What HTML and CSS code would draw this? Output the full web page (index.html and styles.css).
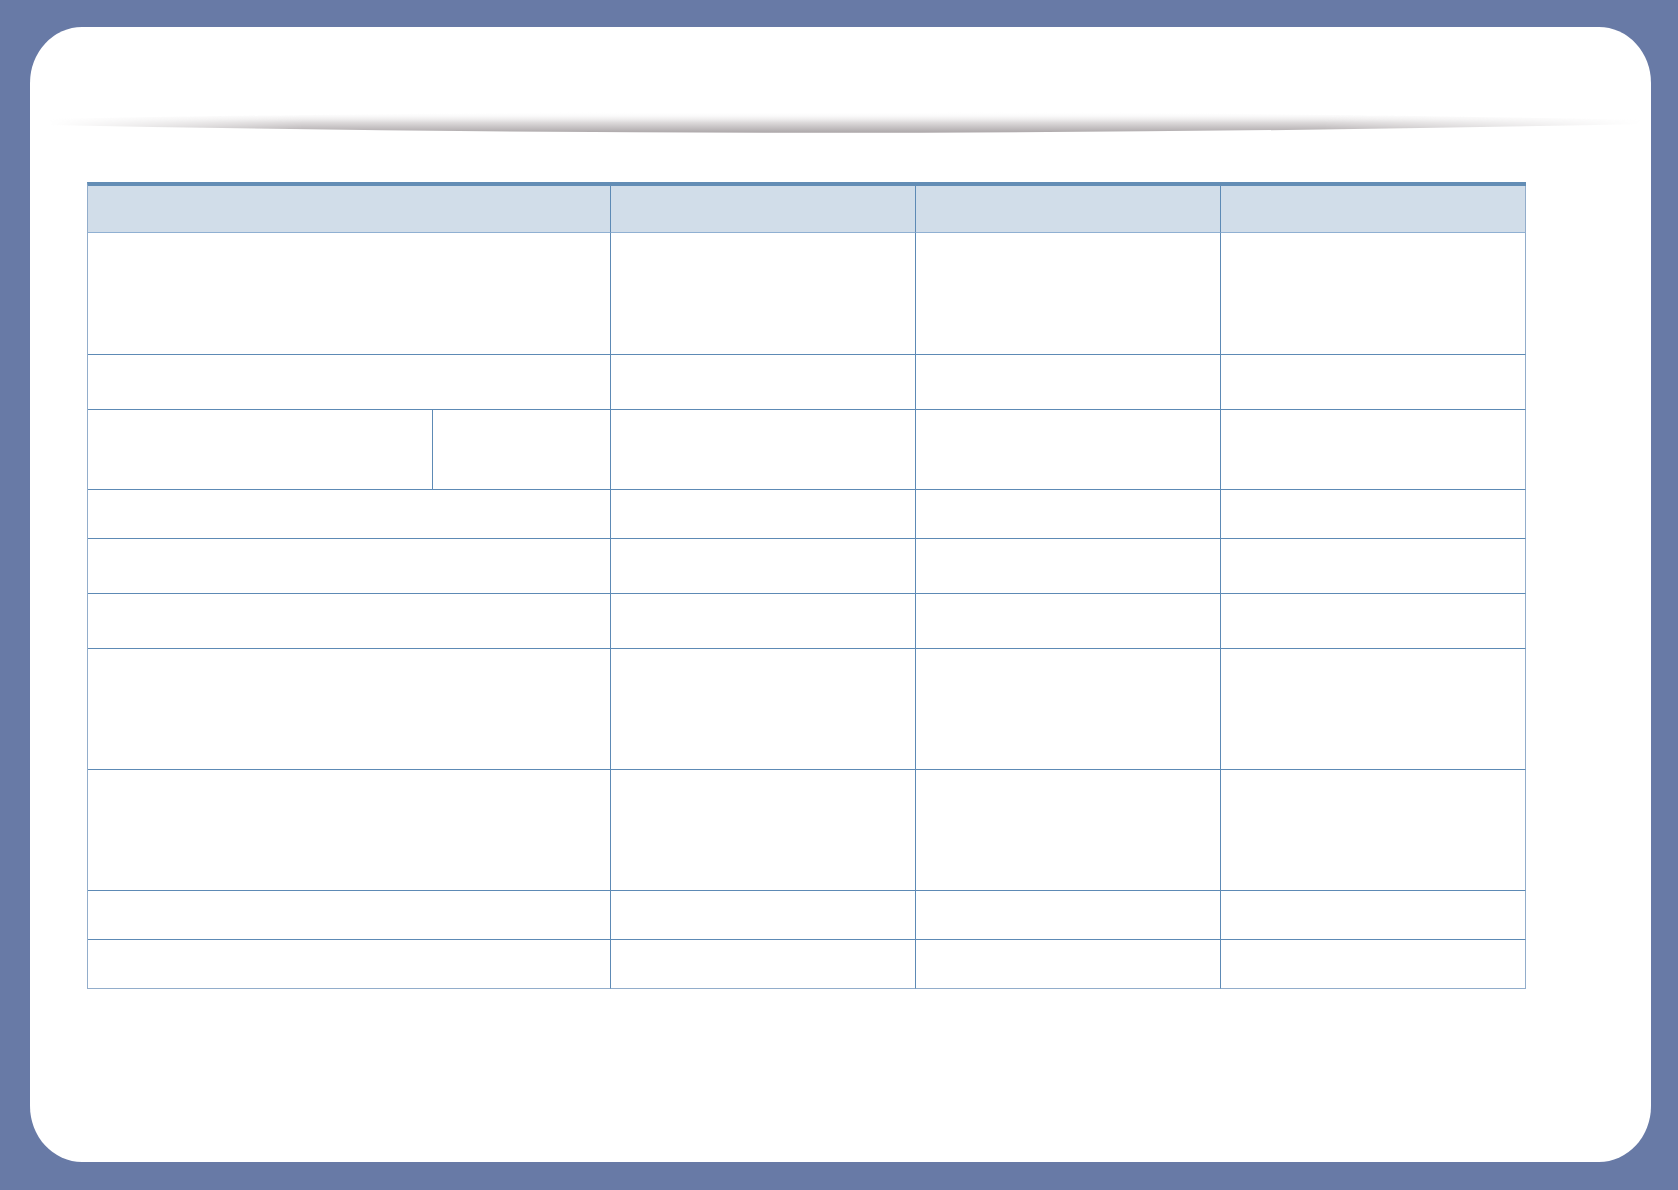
FILE: index.html
```html
<!DOCTYPE html>
<html lang="en">
  <head>
    <meta charset="UTF-8" />
    <meta name="viewport" content="width=device-width, initial-scale=1.0" />
    <title>Specifications</title>

    <link rel="stylesheet" href="styles.css">
  </head>
  <body>
    <div class="panel">
      <svg class="swoosh" viewBox="0 0 1594 26" preserveAspectRatio="none" aria-hidden="true">
        <defs>
          <linearGradient id="swoosh-shade" x1="0" y1="0" x2="0" y2="1">
            <stop offset="0" stop-color="#ffffff" stop-opacity="0" />
            <stop offset="0.5" stop-color="#dedbdc" />
            <stop offset="1" stop-color="#aca7a9" />
          </linearGradient>
          <linearGradient id="swoosh-fade" x1="0" y1="0" x2="1" y2="0">
            <stop offset="0" stop-color="#fff" stop-opacity="0" />
            <stop offset="0.16" stop-color="#fff" stop-opacity="1" />
            <stop offset="0.8" stop-color="#fff" stop-opacity="1" />
            <stop offset="1" stop-color="#fff" stop-opacity="0" />
          </linearGradient>
          <mask id="swoosh-mask">
            <rect x="0" y="0" width="1594" height="26" fill="url(#swoosh-fade)" />
          </mask>
        </defs>
        <path d="M0,15 Q797,31 1594,14 L1594,10 Q797,-6 0,9 Z" fill="url(#swoosh-shade)" mask="url(#swoosh-mask)" />
      </svg>

      <div class="spec-table">
        <!-- header -->
        <div class="cell head wide"></div>
        <div class="cell head"></div>
        <div class="cell head"></div>
        <div class="cell head last"></div>

        <div class="cell wide"></div>
        <div class="cell"></div>
        <div class="cell"></div>
        <div class="cell last"></div>

        <div class="cell wide"></div>
        <div class="cell"></div>
        <div class="cell"></div>
        <div class="cell last"></div>

        <!-- split row -->
        <div class="cell"></div>
        <div class="cell"></div>
        <div class="cell"></div>
        <div class="cell"></div>
        <div class="cell last"></div>

        <div class="cell wide"></div>
        <div class="cell"></div>
        <div class="cell"></div>
        <div class="cell last"></div>

        <div class="cell wide"></div>
        <div class="cell"></div>
        <div class="cell"></div>
        <div class="cell last"></div>

        <div class="cell wide"></div>
        <div class="cell"></div>
        <div class="cell"></div>
        <div class="cell last"></div>

        <div class="cell wide"></div>
        <div class="cell"></div>
        <div class="cell"></div>
        <div class="cell last"></div>

        <div class="cell wide"></div>
        <div class="cell"></div>
        <div class="cell"></div>
        <div class="cell last"></div>

        <div class="cell wide"></div>
        <div class="cell"></div>
        <div class="cell"></div>
        <div class="cell last"></div>

        <div class="cell wide bottom"></div>
        <div class="cell bottom"></div>
        <div class="cell bottom"></div>
        <div class="cell bottom last"></div>
      </div>
    </div>
  </body>
</html>
```

FILE: styles.css
```css
* {
  padding: 0px;
  margin: 0px;
  box-sizing: border-box;
}

body {
  font-family: "Liberation Sans", Arial, sans-serif;
  background-color: #687aa6;
  padding: 27px 27px 28px 30px;
}

/*STRUCTURE*/
.panel {
  display: flex;
  flex-direction: column;
  align-items: flex-start;
  height: 1135px;
  background-color: #ffffff;
  border-radius: 52px / 56px;
  padding-left: 57px;
}

.swoosh {
  display: block;
  width: 1594px;
  height: 26px;
  margin-top: 83px;
  margin-left: -39px;
}

/*TABLE*/
.spec-table {
  display: grid;
  width: fit-content;
  margin-top: 46px;
  grid-template-columns: 345px 178px 305px 305px 305px;
  grid-template-rows: 47px 122px 55px 80px 49px 55px 55px 121px 121px 49px 49px;
  border-top: 4px solid #638db5;
  border-left: 1px solid #92adcb;
}

.cell {
  border-right: 1px solid #5d8ab5;
  border-bottom: 1px solid #5d8ab5;
}

.wide {
  grid-column: span 2;
}

.head {
  background-color: #d1dde9;
  border-bottom-color: #90b0d2;
}

.last {
  border-right-color: #92adcb;
}

.bottom {
  border-bottom-color: #92adcb;
}
```
